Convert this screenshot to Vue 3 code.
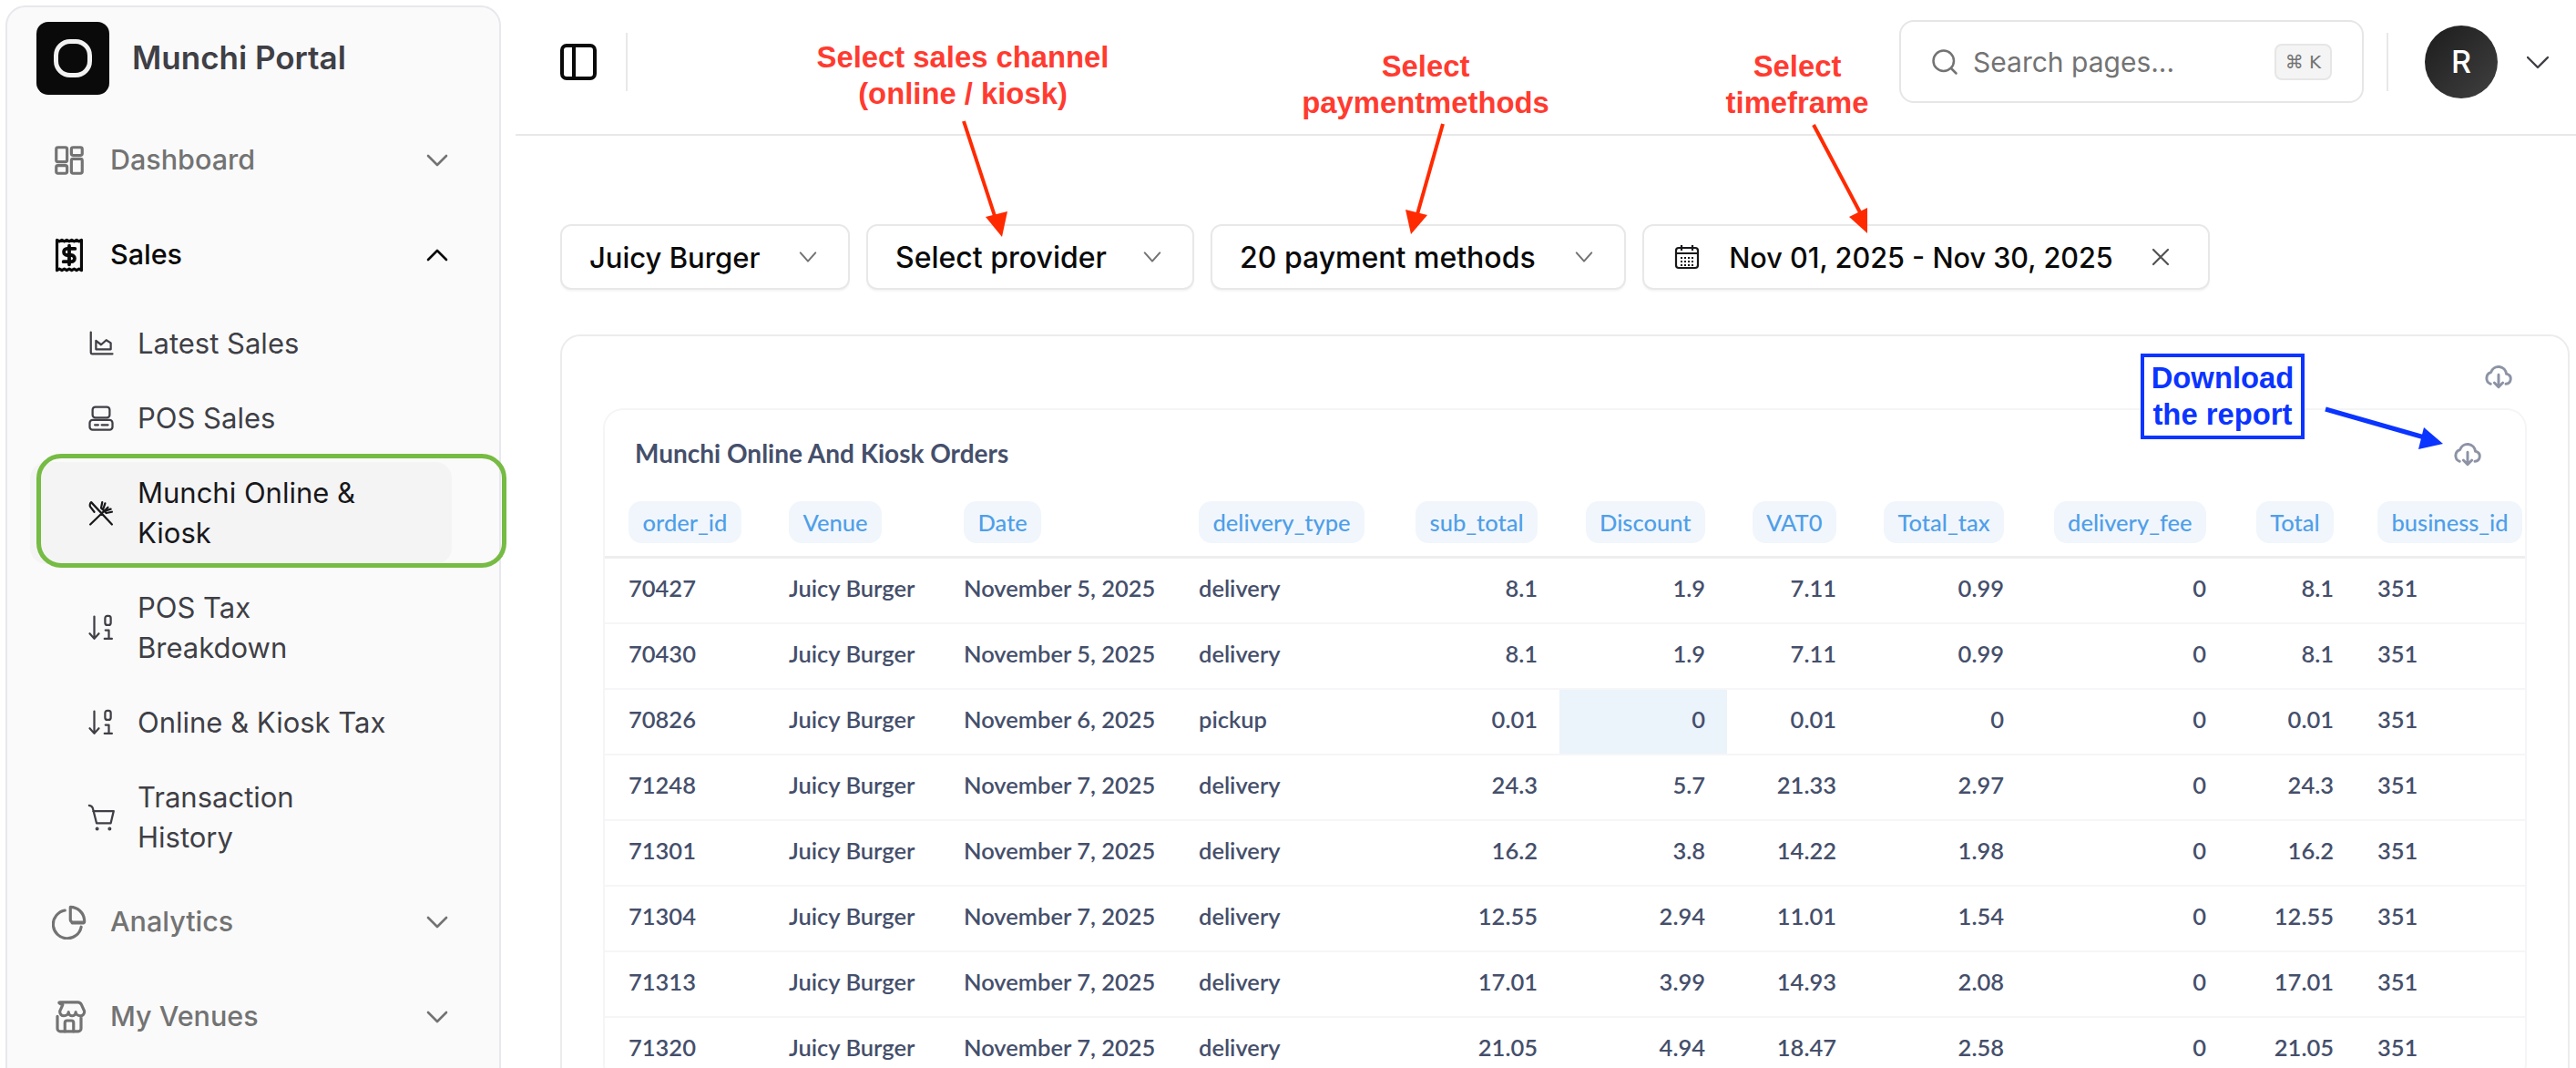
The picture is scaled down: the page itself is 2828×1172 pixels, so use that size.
<script setup>
const icons = {
  dash: '<rect x="3" y="3" width="7.500" height="10" rx="1.200"/><rect x="13.500" y="3" width="7.500" height="5.500" rx="1.200"/><rect x="3" y="15.500" width="7.500" height="5.500" rx="1.200"/><rect x="13.500" y="11" width="7.500" height="10" rx="1.200"/>',
  sales: '<path d="M3.500 1.500l1.700 1 1.700-1 1.700 1 1.700-1 1.700 1 1.700-1 1.700 1 1.700-1 1.700 1 1.700-1V22.500l-1.700-1-1.700 1-1.700-1-1.700 1-1.700-1-1.700 1-1.700-1-1.700 1-1.700-1-1.700 1z"/><path d="M16 7.500h-5.500a2.200 2.200 0 0 0 0 4.500h3a2.200 2.200 0 0 1 0 4.500H8M12 5.500v13" stroke-width="2.400"/>',
  area: '<path d="M3 2v18a1 1 0 0 0 1 1h18"/><path d="M7.500 17V9.500l4.500 3.500 4.500-4 4 2.500V17z"/>',
  pos: '<rect x="4.500" y="2" width="15" height="9.500" rx="2.500"/><rect x="2" y="13.500" width="20" height="8.500" rx="2.500"/><path d="M6.500 17.800h3M12.500 17.800h5.500"/>',
  food: '<path d="M2.500 22L18 7M13 2.500L12 7.500l4.500 4.500 5-1M15.500 3.500l-1.500 4.500M20.500 8.500l-4.500 1.500M6 11L2.500 6.500c-.7-1-.3-3 .8-4L21.500 22"/>',
  sort: '<path d="M6 2v19M2 17l4 4.500 4-4.500"/><rect x="15.500" y="1.500" width="5" height="8" rx="2"/><path d="M15.800 14h3V21.500M15 21.500h6.500"/>',
  cart: '<path d="M1.500 1.500c1.800.2 2.800 1 3.200 2.500L8 17h12.500L23 6.500H5"/><circle cx="8.500" cy="22" r=".7"/><circle cx="19.500" cy="22" r=".7"/>',
  pie: '<path d="M9 3.800a9.800 9.800 0 1 0 11.300 11.500M14 12.500h8"/><path d="M12.800 1.500a9.800 9.800 0 0 1 9.700 9v1.500h-8a1.700 1.700 0 0 1-1.700-1.700z"/>',
  store: '<path d="M6 1.800h12c1.300 0 2 .7 2.500 1.800l2 4.400c.2 2-1.200 3.200-2.800 3.200-1.700 0-3.200-1-3.200-2.700 0 1.700-1.200 2.700-2.500 2.700s-2.500-1-2.500-2.700c0 1.700-1.500 2.700-3.200 2.700-1.600 0-3-1.200-2.800-3.200l2-4.400C4 2.500 4.700 1.800 6 1.800zM3.800 11.500v8.500a2 2 0 0 0 2 2h12.400a2 2 0 0 0 2-2v-8.500"/><path d="M9 22v-6a1.500 1.500 0 0 1 1.500-1.500h3A1.500 1.500 0 0 1 15 16v6"/>'
}

const sub = [
  { icon: 'area', label: 'Latest Sales' },
  { icon: 'pos', label: 'POS Sales' },
  { icon: 'food', label: 'Munchi Online & Kiosk', active: true },
  { icon: 'sort', label: 'POS Tax Breakdown' },
  { icon: 'sort', label: 'Online & Kiosk Tax' },
  { icon: 'cart', label: 'Transaction History' }
]

const columns = [
  { name: 'order_id', w: 176 }, { name: 'Venue', w: 192 }, { name: 'Date', w: 258 },
  { name: 'delivery_type', w: 239 }, { name: 'sub_total', w: 183, num: true }, { name: 'Discount', w: 184, num: true },
  { name: 'VAT0', w: 144, num: true }, { name: 'Total_tax', w: 184, num: true }, { name: 'delivery_fee', w: 222, num: true },
  { name: 'Total', w: 140, num: true }, { name: 'business_id', w: 186 }
]
const gridColumns = columns.map(c => c.w + 'px').join(' ')

const raw = [
  [70427, 5, 'delivery', 8.1, 1.9, 7.11, 0.99],
  [70430, 5, 'delivery', 8.1, 1.9, 7.11, 0.99],
  [70826, 6, 'pickup', 0.01, 0, 0.01, 0],
  [71248, 7, 'delivery', 24.3, 5.7, 21.33, 2.97],
  [71301, 7, 'delivery', 16.2, 3.8, 14.22, 1.98],
  [71304, 7, 'delivery', 12.55, 2.94, 11.01, 1.54],
  [71313, 7, 'delivery', 17.01, 3.99, 14.93, 2.08],
  [71320, 7, 'delivery', 21.05, 4.94, 18.47, 2.58]
]
const rows = raw.map(r => [r[0], 'Juicy Burger', `November ${r[1]}, 2025`, r[2], r[3], r[4], r[5], r[6], 0, r[3], 351])
</script>

<template>
  <div class="page">
    <div class="side-wrap">
      <aside class="side">
        <div class="brand">
          <span class="logo"><span class="logo-ring"></span></span>
          <span class="brand-name">Munchi Portal</span>
        </div>
        <div class="group">
          <svg class="gicon" viewBox="0 0 24 24" v-html="icons.dash"></svg>
          <span class="glabel">Dashboard</span>
          <svg class="chev" viewBox="0 0 24 24"><path d="M2 7l10 10L22 7" /></svg>
        </div>
        <div class="group open">
          <svg class="gicon" viewBox="0 0 24 24" v-html="icons.sales"></svg>
          <span class="glabel">Sales</span>
          <svg class="chev" viewBox="0 0 24 24"><path d="M2 17L12 7l10 10" /></svg>
        </div>
        <div class="subs">
          <div v-for="s in sub" :key="s.label" class="sub" :class="{ active: s.active }">
            <svg class="sicon" viewBox="0 0 24 24" v-html="icons[s.icon]"></svg>
            <span class="slabel">{{ s.label }}</span>
          </div>
          <div class="green"></div>
        </div>
        <div class="group">
          <svg class="gicon" viewBox="0 0 24 24" v-html="icons.pie"></svg>
          <span class="glabel">Analytics</span>
          <svg class="chev" viewBox="0 0 24 24"><path d="M2 7l10 10L22 7" /></svg>
        </div>
        <div class="group">
          <svg class="gicon" viewBox="0 0 24 24" v-html="icons.store"></svg>
          <span class="glabel">My Venues</span>
          <svg class="chev" viewBox="0 0 24 24"><path d="M2 7l10 10L22 7" /></svg>
        </div>
      </aside>
    </div>

    <main class="main">
      <header class="top">
        <svg class="toggle" viewBox="0 0 40 40"><rect x="2" y="2" width="36" height="36" rx="5" /><path d="M15 2v36" /></svg>
        <span class="vline first"></span>
        <div class="search">
          <svg class="search-icon" viewBox="0 0 24 24"><circle cx="11" cy="11" r="9" /><path d="M18 18l4 4" /></svg>
          <span class="search-text">Search pages...</span>
          <kbd class="kbd">⌘ K</kbd>
        </div>
        <span class="vline"></span>
        <span class="avatar">R</span>
        <svg class="avatar-chev" viewBox="0 0 24 24"><path d="M1 7l11 11L23 7" /></svg>
      </header>

      <div class="filters">
        <div class="filter f1"><span>Juicy Burger</span><svg class="fchev" viewBox="0 0 24 24"><path d="M3 7l9 10 9-10" /></svg></div>
        <div class="filter f2"><span>Select provider</span><svg class="fchev" viewBox="0 0 24 24"><path d="M3 7l9 10 9-10" /></svg></div>
        <div class="filter f3"><span>20 payment methods</span><svg class="fchev" viewBox="0 0 24 24"><path d="M3 7l9 10 9-10" /></svg></div>
        <div class="filter f4">
          <svg class="cal" viewBox="0 0 28 28">
            <rect x="2" y="4" width="24" height="22" rx="3" />
            <path d="M2 10h24M8 1v6M20 1v6" />
            <path class="dots" d="M7 15h14M7 19h14M7 23h14" />
          </svg>
          <span class="range">Nov 01, 2025 - Nov 30, 2025</span>
          <svg class="fx" viewBox="0 0 20 20"><path d="M2 2l16 16M18 2L2 18" /></svg>
        </div>
      </div>

      <section class="outer">
        <div class="outer-tools">
          <svg class="cloud" viewBox="0 0 24 24"><path d="M18 19a4.200 4.200 0 0 0 1-8.200h-.6a6.500 6.500 0 0 0-12.700-1.300A5 5 0 0 0 5.500 19" /><path d="M12 11.500v10M8.500 18l3.500 3.500 3.500-3.500" /></svg>
        </div>
        <div class="inner">
          <div class="inner-head">
            <h2 class="title">Munchi Online And Kiosk Orders</h2>
            <svg class="cloud" viewBox="0 0 24 24"><path d="M18 19a4.200 4.200 0 0 0 1-8.200h-.6a6.500 6.500 0 0 0-12.700-1.300A5 5 0 0 0 5.500 19" /><path d="M12 11.500v10M8.500 18l3.500 3.500 3.500-3.500" /></svg>
          </div>
          <div class="thead" :style="{ gridTemplateColumns: gridColumns }">
            <div v-for="c in columns" :key="c.name" class="th" :class="{ num: c.num }"><span class="pill">{{ c.name }}</span></div>
          </div>
          <div v-for="(r, i) in rows" :key="r[0]" class="tr" :style="{ gridTemplateColumns: gridColumns }">
            <div v-for="(v, j) in r" :key="j" class="td" :class="{ num: columns[j].num, hl: i === 2 && j === 5 }">{{ v }}</div>
          </div>
        </div>
      </section>
    </main>

    <div class="note red n1">Select sales channel<br />(online / kiosk)</div>
    <div class="note red n2">Select<br />paymentmethods</div>
    <div class="note red n3">Select<br />timeframe</div>
    <div class="note blue-box">Download<br />the report</div>
    <svg class="arrows" viewBox="0 0 2828 1172">
      <g stroke="#ff2a00" fill="#ff2a00" stroke-width="4">
        <path d="M1058 133L1093 240" />
        <path d="M1100 260L1082 238 1106 232z" stroke="none" />
        <path d="M1584 136L1556 235" />
        <path d="M1549 257L1543 230 1567 236z" stroke="none" />
        <path d="M1991 137L2043 235" />
        <path d="M2050 256L2030 238 2050 228z" stroke="none" />
      </g>
      <g stroke="#0a34ff" fill="#0a34ff" stroke-width="5">
        <path d="M2553 449L2665 481" />
        <path d="M2682 487L2655 493 2661 469z" stroke="none" />
      </g>
    </svg>
  </div>
</template>

<style scoped>
.page {
  position: relative;
  display: flex;
  width: 2828px;
  height: 1172px;
  overflow: hidden;
  background: #fff;
  font-family: "Inter", "Liberation Sans", sans-serif;
}
.side-wrap { width: 566px; flex: none; padding: 6px 16px 0 6px; box-sizing: border-box; }
.side {
  width: 544px;
  height: 1300px;
  box-sizing: border-box;
  padding: 16px 0 0 32px;
  background: #fafafa;
  border: 2px solid #e7e7ee;
  border-radius: 22px;
}
.brand { display: flex; align-items: center; gap: 25px; height: 80px; margin-bottom: 20px; }
.logo { width: 80px; height: 80px; border-radius: 13px; background: #0a0a0a; display: flex; align-items: center; justify-content: center; }
.logo-ring { width: 42px; height: 42px; box-sizing: border-box; border: 5px solid #f2f2f2; border-radius: 18px; }
.brand-name { font-size: 35px; font-weight: 600; color: #3f3f46; padding-bottom: 3px; }
.group { display: flex; align-items: center; height: 104px; padding: 0 0 1px 17px; box-sizing: border-box; color: #737373; }
.group.open { color: #0a0a0a; }
.gicon { width: 38px; height: 38px; flex: none; fill: none; stroke: currentColor; stroke-width: 2; stroke-linecap: round; stroke-linejoin: round; }
.glabel { margin-left: 26px; font-size: 30.500px; font-weight: 500; flex: 1; padding-bottom: 2px; }
.chev { width: 24px; height: 24px; margin-right: 56px; fill: none; stroke: currentColor; stroke-width: 2.600; stroke-linecap: round; stroke-linejoin: round; }
.subs { position: relative; margin: 11px 0 7px; display: flex; flex-direction: column; gap: 14px; }
.sub {
  display: flex; align-items: center;
  width: 463px; box-sizing: border-box;
  margin-left: -7px;
  padding: 12px 20px 12px 63px;
  color: #3f3f46;
  border-radius: 18px;
}
.sub.active { background: #f4f4f5; color: #18181b; }
.sicon { width: 30px; height: 30px; flex: none; fill: none; stroke: currentColor; stroke-width: 1.800; stroke-linecap: round; stroke-linejoin: round; }
.slabel { margin-left: 25px; font-size: 31px; line-height: 44px; max-width: 280px; }
.green {
  position: absolute;
  left: 0; top: 155px;
  width: 516px; height: 125px;
  box-sizing: border-box;
  border: 5px solid #76bb43;
  border-radius: 27px;
  pointer-events: none;
}
.main { flex: 1; min-width: 0; }
.top {
  display: flex; align-items: center;
  height: 149px; box-sizing: border-box;
  padding: 0 30px 12px 49px;
  border-bottom: 2px solid #e8e8e8;
}
.toggle { width: 40px; height: 40px; fill: none; stroke: #0a0a0a; stroke-width: 4; }
.vline { width: 2px; height: 64px; background: #e8e8e8; margin: 0 40px 0 25px; flex: none; }
.vline.first { margin: 0 auto 0 32px; }
.search {
  display: flex; align-items: center;
  width: 510px; height: 91px; box-sizing: border-box;
  padding: 0 33px 0 33px;
  border: 2px solid #e6e6e6;
  border-radius: 16px;
  color: #737373;
}
.search-icon { width: 30px; height: 30px; fill: none; stroke: #737373; stroke-width: 2; stroke-linecap: round; }
.search-text { margin-left: 16px; font-size: 30px; flex: 1; }
.kbd {
  width: 63px; height: 40px; display: flex; align-items: center; justify-content: center;
  font-family: "DejaVu Sans", sans-serif; font-size: 20px; color: #737373;
  background: #f4f4f5; border: 2px solid #e6e6e6; border-radius: 8px; box-sizing: border-box;
}
.avatar {
  width: 80px; height: 80px; border-radius: 50%; flex: none;
  background: linear-gradient(135deg, #1c1c1c, #404040);
  color: #fff; display: flex; align-items: center; justify-content: center;
  font-size: 34px; font-weight: 500;
}
.avatar-chev { width: 24px; height: 24px; margin-left: 32px; fill: none; stroke: #3f3f46; stroke-width: 2.400; stroke-linecap: round; stroke-linejoin: round; }
.filters { display: flex; gap: 18px; margin: 97px 0 0 49px; }
.filter {
  display: flex; align-items: center; justify-content: space-between;
  height: 72px; box-sizing: border-box;
  padding: 0 33px 0 30px;
  background: #fff;
  border: 2px solid #e8e8e8;
  border-radius: 12px;
  box-shadow: 0 2px 2px rgba(0,0,0,.04);
  font-size: 32px; font-weight: 500; color: #0a0a0a;
}
.f1 { width: 318px; font-size: 31px; }
.f2 { width: 360px; }
.f3 { width: 456px; }
.f4 { width: 623px; padding: 0 42px 0 33px; font-size: 30.600px; }
.range { margin-right: 10px; }
.fchev { width: 22px; height: 22px; fill: none; stroke: #737373; stroke-width: 2.200; stroke-linecap: round; stroke-linejoin: round; }
.cal { width: 28px; height: 28px; flex: none; fill: none; stroke: #18181b; stroke-width: 2.200; }
.dots { stroke-width: 2; stroke-dasharray: 2 2; }
.fx { width: 20px; height: 20px; fill: none; stroke: #525252; stroke-width: 2.200; stroke-linecap: round; }
.outer {
  width: 2206px; box-sizing: border-box;
  margin: 49px 0 0 49px;
  height: 900px;
  padding: 0 47px;
  border: 2px solid #ececec;
  border-radius: 22px;
}
.outer-tools { height: 79px; display: flex; align-items: center; justify-content: flex-end; padding: 6px 13px 0 0; box-sizing: border-box; }
.cloud { width: 32px; height: 32px; fill: none; stroke: #8d93a5; stroke-width: 2.200; stroke-linecap: round; stroke-linejoin: round; }
.inner {
  width: 2108px;
  border: 2px solid #f5f5f7;
  border-bottom: none;
  border-radius: 22px;
  box-sizing: content-box;
  font-family: "Lato", "Liberation Sans", sans-serif;
  margin-left: -2px;
}
.inner-head { display: flex; align-items: center; justify-content: space-between; height: 100px; padding: 0 47px 7px 33px; box-sizing: border-box; }
.title { margin: 0; font-size: 28px; font-weight: 700; color: #454f6b; }
.thead, .tr { display: grid; }
.thead { height: 60px; border-bottom: 3px solid #eeeeee; align-items: start; }
.th { padding-left: 26px; }
.th:last-child, .td:last-child { padding-left: 24px; }
.th.num { padding: 0 24px 0 0; text-align: right; }
.pill {
  display: inline-flex; align-items: center;
  height: 46px; padding: 0 15.500px;
  background: #f1f6fd; color: #4f9fe8;
  border-radius: 14px;
  font-size: 25.500px; font-weight: 500;
}
.tr { height: 72px; border-bottom: 2px solid #f6f6f8; box-sizing: border-box; }
.td { display: flex; align-items: center; padding-left: 26px; padding-bottom: 6px; font-size: 25.500px; font-weight: 600; color: #454f6b; }
.td.num { justify-content: flex-end; padding: 0 24px 6px 0; }
.td.hl { background: #ebf3fb; }
.note { position: absolute; text-align: center; font-family: "Liberation Sans", Arial, sans-serif; font-weight: 700; font-size: 32.800px; line-height: 40px; }
.red { color: #ff3b30; }
.n1 { left: 857px; top: 43px; width: 400px; }
.n2 { left: 1365px; top: 53px; width: 400px; }
.n3 { left: 1773px; top: 53px; width: 400px; }
.blue-box {
  left: 2350px; top: 388px; width: 180px; height: 94px;
  box-sizing: border-box;
  border: 4px solid #0a34ff;
  background: #fff;
  color: #0a34ff;
  display: flex; align-items: center; justify-content: center;
}
.arrows { position: absolute; left: 0; top: 0; width: 2828px; height: 1172px; pointer-events: none; }
</style>

<style>
html, body { margin: 0; padding: 0; background: #fff; overflow: hidden; }
</style>
